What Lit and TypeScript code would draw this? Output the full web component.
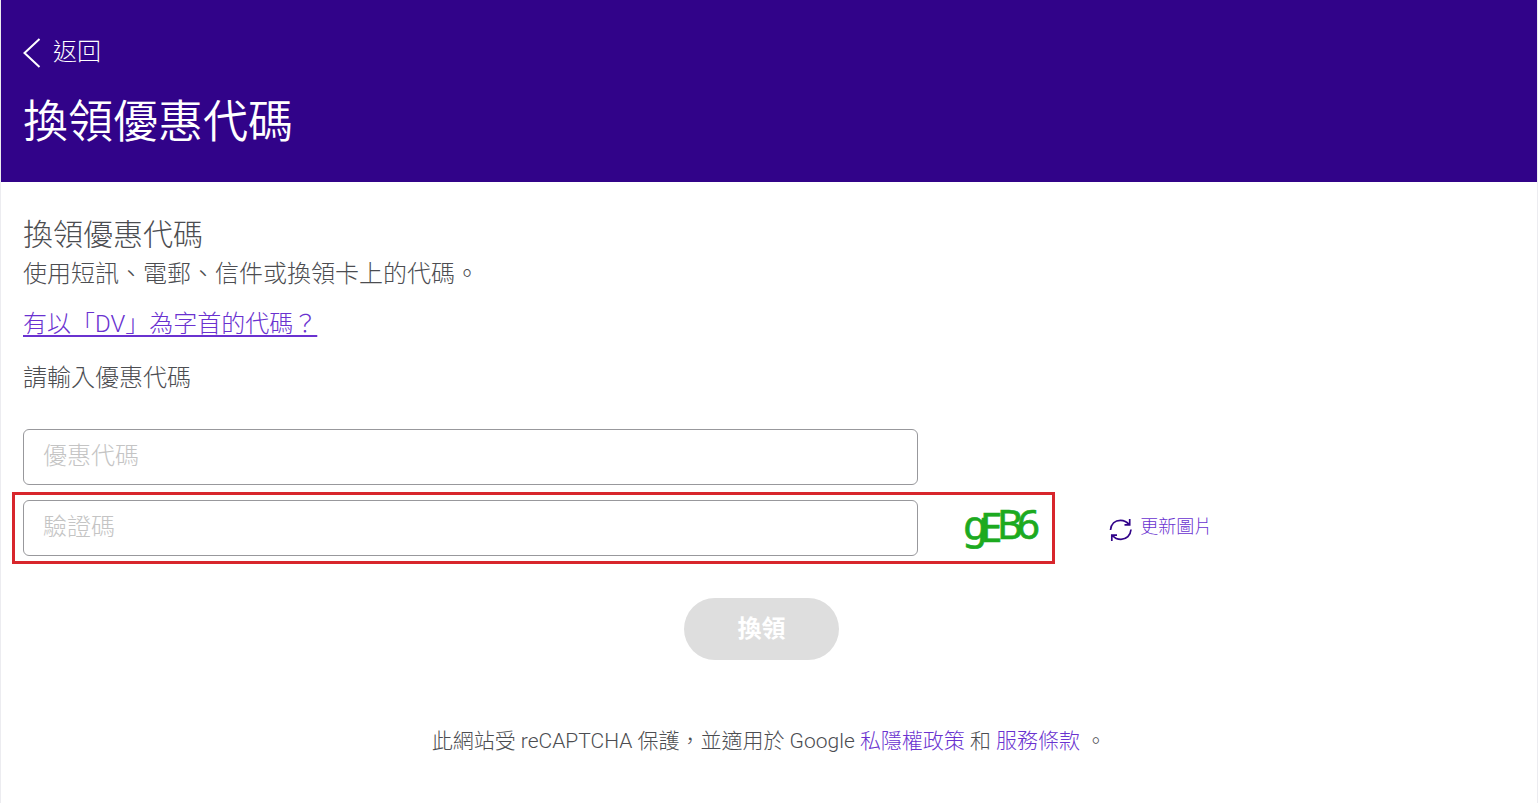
import { LitElement, html, css } from "lit";
import { customElement } from "lit/decorators.js";

@customElement("app-root")
export class AppRoot extends LitElement {
  static styles = css`
    :host {
      display: block;
      box-sizing: border-box;
      min-height: 100vh;
      border: solid #ececf0;
      border-width: 0 1px;
      background: #fff;
      color: #4c4d51;
      font-family: Roboto, "Noto Sans CJK TC", sans-serif;
      font-weight: 300;
      font-size: 24px;
      line-height: 36px;
    }
    * { box-sizing: border-box; }
    h1, h2, p { margin: 0; font-weight: 300; }
    a { color: #6a32d0; text-decoration: none; }
    button, input { font: inherit; }
    .banner {
      padding: 34px 22px 26px;
      background: #310389;
      color: #fff;
    }
    .back {
      display: inline-flex;
      align-items: center;
      gap: 12px;
      color: inherit;
      vertical-align: top;
    }
    .back svg { display: block; margin-top: 2px; }
    .title {
      margin-top: 20px;
      font-size: 45px;
      font-weight: 350;
      line-height: 66px;
    }
    .content { padding: 32px 22px 24px; }
    .heading { font-size: 30px; line-height: 42px; }
    .prefix { margin-top: 14px; }
    .prefix a {
      text-decoration: underline;
      text-decoration-thickness: 2px;
      text-underline-offset: 3px;
    }
    .prompt { margin-top: 18px; }
    .fields {
      display: grid;
      grid-template-columns: 60% 129px 1fr;
      row-gap: 15px;
      align-items: center;
      margin-top: 33px;
    }
    .box {
      grid-column: 1;
      width: 100%;
      height: 56px;
      padding: 0 19px 2px;
      border: 1px solid #98989c;
      border-radius: 6px;
      background: #fff;
      color: inherit;
      outline-color: #6a32d0;
    }
    .box::placeholder { color: #c4c4c4; opacity: 1; }
    .second { grid-row: 2; }
    .captcha {
      grid-area: 2 / 2;
      justify-self: end;
      display: block;
      overflow: visible;
      margin-right: 4px;
    }
    .frame {
      grid-area: 2 / 1 / 3 / 3;
      align-self: stretch;
      margin: -8px -8px -8px -11px;
      border: 3px solid #d8262c;
      pointer-events: none;
    }
    .refresh {
      grid-area: 2 / 3;
      justify-self: start;
      display: flex;
      align-items: center;
      gap: 8px;
      margin-left: 62px;
      padding: 0;
      border: 0;
      background: none;
      color: #6a32d0;
      font-size: 18px;
      line-height: 24px;
    }
    .refresh svg { display: block; margin-top: 4px; }
    .refresh span { margin-bottom: 2px; }
    .actions { display: flex; justify-content: center; margin: 42px 15px 0 0; }
    .submit {
      width: 155px;
      height: 62px;
      padding: 0;
      border: 0;
      border-radius: 31px;
      background: #dedede;
      color: #fff;
      font-weight: 700;
    }
    .legal {
      margin-top: 63px;
      text-align: center;
      font-size: 21px;
    }
  `;

  render() {
    return html`
      <header class="banner">
        <a class="back" href="#">
          <svg width="18" height="30" viewBox="0 0 18 30" fill="none" stroke="currentColor" stroke-width="2" aria-hidden="true">
            <path d="M16.500 1 1.500 15l15 14" />
          </svg>
          <span>返回</span>
        </a>
        <h1 class="title">換領優惠代碼</h1>
      </header>
      <main class="content">
        <h2 class="heading">換領優惠代碼</h2>
        <p>使用短訊、電郵、信件或換領卡上的代碼。</p>
        <p class="prefix"><a href="#">有以「DV」為字首的代碼？</a></p>
        <p class="prompt">請輸入優惠代碼</p>
        <form @submit=${(e: Event) => e.preventDefault()}>
          <div class="fields">
            <input class="box" type="text" aria-label="優惠代碼" placeholder="優惠代碼" />
            <input class="box second" type="text" aria-label="驗證碼" placeholder="驗證碼" />
            <svg class="captcha" width="80" height="48" viewBox="0 0 80 48" fill="#1caa1f" stroke="#1caa1f" stroke-width="0.7" font-family="Noto Sans" font-size="40" font-weight="400">
              <text x="0" y="35" transform="rotate(3 10 30)">g</text>
              <text x="17" y="38">E</text>
              <text x="34" y="35">B</text>
              <text x="54" y="35">6</text>
            </svg>
            <div class="frame"></div>
            <button class="refresh" type="button">
              <svg width="23" height="24" viewBox="0 0 23 24" fill="none" stroke="#310389" stroke-width="1.700" aria-hidden="true">
                <path d="M1.500 12C2 6 6 2.300 11.500 2.300c3.500 0 6.500 1.500 8.500 4.200M20.700 1v5.800H15.500M22 11.500c-.5 6-4.500 9.900-10 9.900-3.500 0-6.500-1.500-8.500-4.200M2.800 23v-5.800H8" />
              </svg>
              <span>更新圖片</span>
            </button>
          </div>
          <div class="actions"><button class="submit" type="submit" disabled>換領</button></div>
        </form>
        <p class="legal">此網站受 reCAPTCHA 保護，並適用於 Google <a href="#">私隱權政策</a> 和 <a href="#">服務條款</a> 。</p>
      </main>
    `;
  }
}
